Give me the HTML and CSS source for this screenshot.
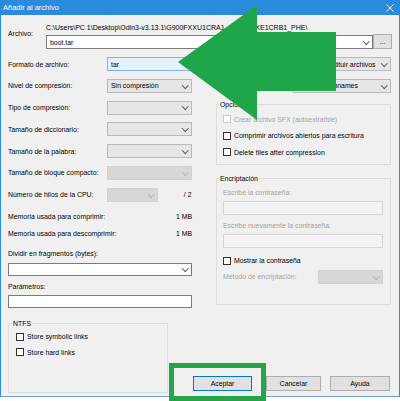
FILE: index.html
```html
<!DOCTYPE html>
<html lang="es">
<head>
<meta charset="utf-8">
<title>Añadir al archivo</title>
<link rel="stylesheet" href="styles.css">
</head>
<body>
<div class="window">
  <header class="titlebar">
    <span class="title">Añadir al archivo</span>
    <svg class="close" width="8" height="8" viewBox="0 0 8 8"><path d="M0.5 0.5 L7.5 7.5 M7.5 0.5 L0.5 7.5" stroke="#fff" stroke-width="1"/></svg>
  </header>

  <main class="client">
    <section class="archive">
      <span class="archive-label">Archivo:</span>
      <div class="archive-main">
        <div class="path">C:\Users\PC 1\Desktop\Odin3-v3.13.1\G900FXXU1CRA1_G900FOXE1CRB1_PHE\</div>
        <div class="combo edit archive-combo"><span class="value">boot.tar</span><span class="caret"></span></div>
      </div>
      <button class="btn browse">...</button>
    </section>

    <div class="columns">
      <div class="col-left">
        <div class="fields">
          <span>Formato de archivo:</span>
          <div class="combo hot"><span class="value">tar</span><span class="caret"></span></div>
          <span>Nivel de compresión:</span>
          <div class="combo"><span class="value">Sin compresión</span><span class="caret"></span></div>
          <span>Tipo de compresión:</span>
          <div class="combo"><span class="caret"></span></div>
          <span>Tamaño de diccionario:</span>
          <div class="combo"><span class="caret"></span></div>
          <span>Tamaño de la palabra:</span>
          <div class="combo"><span class="caret"></span></div>
          <span>Tamaño de bloque compacto:</span>
          <div class="combo off"><span class="caret"></span></div>
          <span>Número de hilos de la CPU:</span>
          <div class="threads">
            <div class="combo off threads-combo"><span class="caret"></span></div>
            <span>/ 2</span>
          </div>
        </div>

        <div class="mem first"><span>Memoria usada para comprimir:</span><span>1 MB</span></div>
        <div class="mem"><span>Memoria usada para descomprimir:</span><span>1 MB</span></div>

        <div class="caption split-caption">Dividir en fragmentos (bytes):</div>
        <div class="combo edit field-box"><span class="caret"></span></div>

        <div class="caption params-caption">Parámetros:</div>
        <div class="textbox field-box"></div>
      </div>

      <div class="col-right">
        <div class="fields fields-right">
          <span>Modo de actualización:</span>
          <div class="combo"><span class="value">Añadir y sustituir archivos</span><span class="caret"></span></div>
          <span>Modo de ruta:</span>
          <div class="combo"><span class="value">Relative pathnames</span><span class="caret"></span></div>
        </div>

        <fieldset class="group options">
          <legend>Opciones</legend>
          <label class="check disabled"><span class="box"></span>Crear archivo SFX (autoextraíble)</label>
          <label class="check"><span class="box"></span>Comprimir archivos abiertos para escritura</label>
          <label class="check"><span class="box"></span>Delete files after compression</label>
        </fieldset>

        <fieldset class="group crypto">
          <legend>Encriptación</legend>
          <div class="caption disabled">Escribe la contraseña:</div>
          <div class="textbox off pw"></div>
          <div class="caption disabled pw-caption">Escribe nuevamente la contraseña:</div>
          <div class="textbox off pw"></div>
          <label class="check show-pw"><span class="box"></span>Mostrar la contraseña</label>
          <div class="method">
            <span class="disabled">Método de encriptación:</span>
            <div class="combo off method-combo"><span class="caret"></span></div>
          </div>
        </fieldset>
      </div>
    </div>

    <div class="bottom">
      <fieldset class="group ntfs">
        <legend>NTFS</legend>
        <label class="check"><span class="box"></span>Store symbolic links</label>
        <label class="check"><span class="box"></span>Store hard links</label>
      </fieldset>
      <div class="actions">
        <button class="btn default ok">Aceptar</button>
        <button class="btn cancel">Cancelar</button>
        <button class="btn help">Ayuda</button>
      </div>
    </div>
  </main>
</div>

<!-- callout arrow pointing at the format combo -->
<svg class="callout-arrow" width="340" height="125" viewBox="0 0 340 125">
  <polygon points="178,62 257,5 257,32 336,32 336,91 257,91 257,120" fill="#20a64a"/>
</svg>
<!-- highlight frame around the confirm button -->
<div class="callout-frame"></div>
</body>
</html>
```

FILE: styles.css
```css
* {
  box-sizing: border-box;
}

html,
body {
  margin: 0;
  padding: 0;
  background: #ffffff;
}

body {
  position: relative;
  width: 400px;
  height: 401px;
  overflow: hidden;
  font-family: "Liberation Sans", Arial, sans-serif;
  font-size: 6.9px;
  line-height: 9px;
  color: #000;
}

/* ---------- window chrome ---------- */
.window {
  width: 400px;
  height: 397px;
  display: flex;
  flex-direction: column;
  background: #f0f0f0;
  border: 1px solid #2a8adb;
  border-top: none;
  border-bottom-color: #6f9fcf;
}

.titlebar {
  height: 15px;
  flex: none;
  display: flex;
  align-items: center;
  justify-content: space-between;
  background: #2a8adb;
  margin: 0 -1px;
  padding: 0 6px 0 3px;
}

.title {
  color: #fff;
  font-size: 7.5px;
}

.close {
  display: block;
}

.client {
  flex: 1;
  display: flex;
  flex-direction: column;
  padding: 8px 7px 4px 7px;
}

/* ---------- archive path ---------- */
.archive {
  display: flex;
}

.archive-label {
  width: 38px;
  flex: none;
  margin-top: 5.5px;
}

.archive-main {
  flex: 1;
  min-width: 0;
}

.path {
  height: 9px;
  white-space: nowrap;
  font-size: 7px;
}

.archive-combo {
  margin-top: 3px;
  height: 13px;
}

.browse {
  width: 19px;
  height: 15px;
  margin-left: 11px;
  align-self: flex-end;
}

/* ---------- controls ---------- */
.combo {
  display: flex;
  align-items: center;
  height: 14px;
  padding-left: 3px;
  background: #e6e6e6;
  border: 1px solid #b9b9b9;
  white-space: nowrap;
  overflow: hidden;
}

.combo.edit {
  background: #fff;
  border-color: #7a7a7a;
}

.combo.hot {
  background: #e5f1fb;
  border-color: #7eb4ea;
}

.combo.off {
  background: #d7d7d7;
  border-color: #d2d2d2;
}

.caret {
  flex: none;
  width: 7px;
  height: 7px;
  margin-left: auto;
  margin-right: 2px;
  display: flex;
  align-items: center;
  justify-content: center;
}

.caret::before {
  content: "";
  width: 3.5px;
  height: 3.5px;
  border-right: 1px solid #555;
  border-bottom: 1px solid #555;
  transform: translateY(-1px) rotate(45deg);
}

.combo.off .caret::before {
  border-color: #b4b4b4;
}

.textbox {
  height: 13px;
  background: #fff;
  border: 1px solid #7a7a7a;
}

.textbox.off {
  height: 14px;
  background: #f4f4f4;
  border-color: #d6d6d6;
}

.btn {
  display: flex;
  align-items: center;
  justify-content: center;
  margin: 0;
  padding: 0;
  font: inherit;
  color: #000;
  background: #e1e1e1;
  border: 1px solid #adadad;
}

.btn.default {
  border-color: #0078d7;
}

.disabled {
  color: #a3a3a3;
}

.check {
  display: flex;
  align-items: center;
  gap: 3px;
  height: 9px;
  white-space: nowrap;
}

.box {
  width: 8px;
  height: 8px;
  flex: none;
  background: #fff;
  border: 1px solid #333;
}

.check.disabled .box {
  border-color: #cccccc;
}

/* ---------- two-column body ---------- */
.columns {
  display: flex;
  gap: 24px;
  margin-top: 8px;
}

.col-left {
  width: 184px;
  flex: none;
  display: flex;
  flex-direction: column;
}

.col-right {
  width: 175px;
  flex: none;
  display: flex;
  flex-direction: column;
}

.fields {
  display: grid;
  grid-template-columns: 99px 85px;
  grid-auto-rows: 14px;
  row-gap: 7.8px;
  align-items: center;
  white-space: nowrap;
}

.fields-right {
  grid-template-columns: 77px 98px;
}

.threads {
  display: flex;
  align-items: center;
  justify-content: space-between;
  padding-right: 0.5px;
}

.threads-combo {
  width: 51px;
}

.mem {
  display: flex;
  justify-content: space-between;
  height: 9px;
  margin-top: 8px;
}

.mem.first {
  margin-top: 10.7px;
}

.caption {
  height: 9px;
  white-space: nowrap;
}

.split-caption {
  margin-top: 11px;
}

.field-box {
  margin-top: 4.5px;
  height: 13px;
}

.params-caption {
  margin-top: 6.5px;
}

.params-caption + .field-box {
  margin-top: 3.5px;
}

/* ---------- group boxes ---------- */
.group {
  margin: 0;
  min-width: 0;
  border: 1px solid #dcdcdc;
  padding: 5.5px 7px 7.4px 6px;
}

.group legend {
  padding: 0 1px;
  margin-left: -4px;
  height: 9px;
}

.options {
  margin-top: 7.7px;
}

.options .check + .check {
  margin-top: 7.3px;
}

.crypto {
  margin-top: 9.5px;
  padding: 5px 7px 20px 6px;
}

.pw {
  margin-top: 3.5px;
}

.pw-caption {
  margin-top: 6.5px;
}

.show-pw {
  margin-top: 8.5px;
}

.method {
  display: flex;
  align-items: center;
  justify-content: space-between;
  height: 14px;
  margin-top: 4.5px;
}

.method-combo {
  width: 65px;
  background: #cacaca;
  border-color: #c6c6c6;
}

/* ---------- bottom strip ---------- */
.bottom {
  display: flex;
  margin-top: 11.5px;
}

.ntfs {
  width: 160px;
  flex: none;
  padding: 4px 7px 35px 7px;
}

.ntfs .check + .check {
  margin-top: 6.5px;
}

.actions {
  display: flex;
  align-self: flex-end;
  margin: 0 1px 2px 25px;
}

.actions .btn {
  height: 15px;
}

.ok {
  width: 59px;
  margin-right: 14px;
}

.cancel {
  width: 55px;
  margin-right: 9px;
}

.help {
  width: 60px;
}

/* ---------- callouts drawn over the dialog ---------- */
.callout-arrow {
  position: absolute;
  left: 0;
  top: 0;
  pointer-events: none;
}

.callout-frame {
  position: absolute;
  left: 169px;
  top: 363px;
  width: 97px;
  height: 38px;
  border: 5px solid #26a548;
  pointer-events: none;
}
```
